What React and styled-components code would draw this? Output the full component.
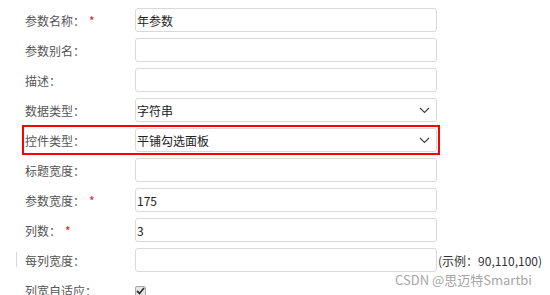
import React from "react";
import styled, { createGlobalStyle } from "styled-components";

const GlobalStyle = createGlobalStyle`
    body {
        margin: 0;
        background: #ffffff;
        font-family: "Noto Sans CJK SC", "Noto Sans", sans-serif;
    }
`;

const fields = [
    { label: "参数名称", required: true, value: "年参数" },
    { label: "参数别名" },
    { label: "描述" },
    { label: "数据类型", value: "字符串", select: true },
    { label: "控件类型", value: "平铺勾选面板", select: true, highlight: true },
    { label: "标题宽度" },
    { label: "参数宽度", required: true, value: "175" },
    { label: "列数", required: true, value: "3" },
    { label: "每列宽度", hint: "(示例：90,110,100)", marked: true },
];

function Chevron() {
    return (
        <svg width="11" height="7" viewBox="0 0 11 7">
            <polyline
                points="1,1 5.5,5.5 10,1"
                fill="none"
                stroke="#444"
                strokeWidth="1.2"
            />
        </svg>
    );
}

export default function App() {
    return (
        <>
            <GlobalStyle />
            <Page>
                <Form>
                    {fields.map((f) => (
                        <Row key={f.label} highlight={f.highlight} marked={f.marked}>
                            <Label>
                                {f.label}：
                                {f.required && <Star>*</Star>}
                            </Label>
                            <Field>
                                <span>{f.value}</span>
                                {f.select && <Chevron />}
                            </Field>
                            {f.hint && <Hint>{f.hint}</Hint>}
                        </Row>
                    ))}
                    <Row>
                        <Label>列宽自适应：</Label>
                        <CheckBox>
                            <svg width="9" height="8" viewBox="0 0 9 8">
                                <polyline
                                    points="1,4 3.5,6.5 8,1"
                                    fill="none"
                                    stroke="#333"
                                    strokeWidth="1.8"
                                />
                            </svg>
                        </CheckBox>
                    </Row>
                </Form>
                <Watermark>CSDN @思迈特Smartbi</Watermark>
            </Page>
        </>
    );
}

const Page = styled.div`
    position: relative;
    width: 550px;
    height: 295px;
    overflow: hidden;
    padding: 8px 0 0 25px;
    box-sizing: border-box;
`;

const Form = styled.div`
    display: flex;
    flex-direction: column;
    gap: 6px;
`;

const Row = styled.div`
    position: relative;
    display: flex;
    align-items: center;
    height: 24px;
    width: 412px;
    outline: ${(p) => (p.highlight ? "2px solid #ff0000" : "none")};
    outline-offset: 1px;
    &::before {
        content: "";
        display: ${(p) => (p.marked ? "block" : "none")};
        position: absolute;
        left: -9px;
        top: 4px;
        width: 1px;
        height: 15px;
        background: #d6d6d6;
    }
`;

const Label = styled.div`
    width: 110px;
    flex: none;
    font-size: 12px;
    color: #555555;
    white-space: nowrap;
`;

const Star = styled.span`
    color: #e02020;
    margin-left: 4px;
`;

const Field = styled.div`
    flex: none;
    width: 302px;
    height: 24px;
    box-sizing: border-box;
    border: 1px solid #d9d9d9;
    border-radius: 3px;
    display: flex;
    align-items: center;
    justify-content: space-between;
    padding: 0 6px 0 1px;
    font-size: 12px;
    color: #222222;
`;

const Hint = styled.span`
    flex: none;
    margin-left: 1px;
    font-size: 12px;
    color: #333333;
    white-space: nowrap;
`;

const CheckBox = styled.div`
    width: 11px;
    height: 11px;
    margin-top: 2px;
    box-sizing: border-box;
    border: 1px solid #a8a8a8;
    border-radius: 2px;
    background: #e6e6e6;
    display: flex;
    align-items: center;
    justify-content: center;
`;

const Watermark = styled.div`
    position: absolute;
    left: 395px;
    top: 270px;
    font-size: 13px;
    color: #a6a6a6;
    white-space: nowrap;
`;
